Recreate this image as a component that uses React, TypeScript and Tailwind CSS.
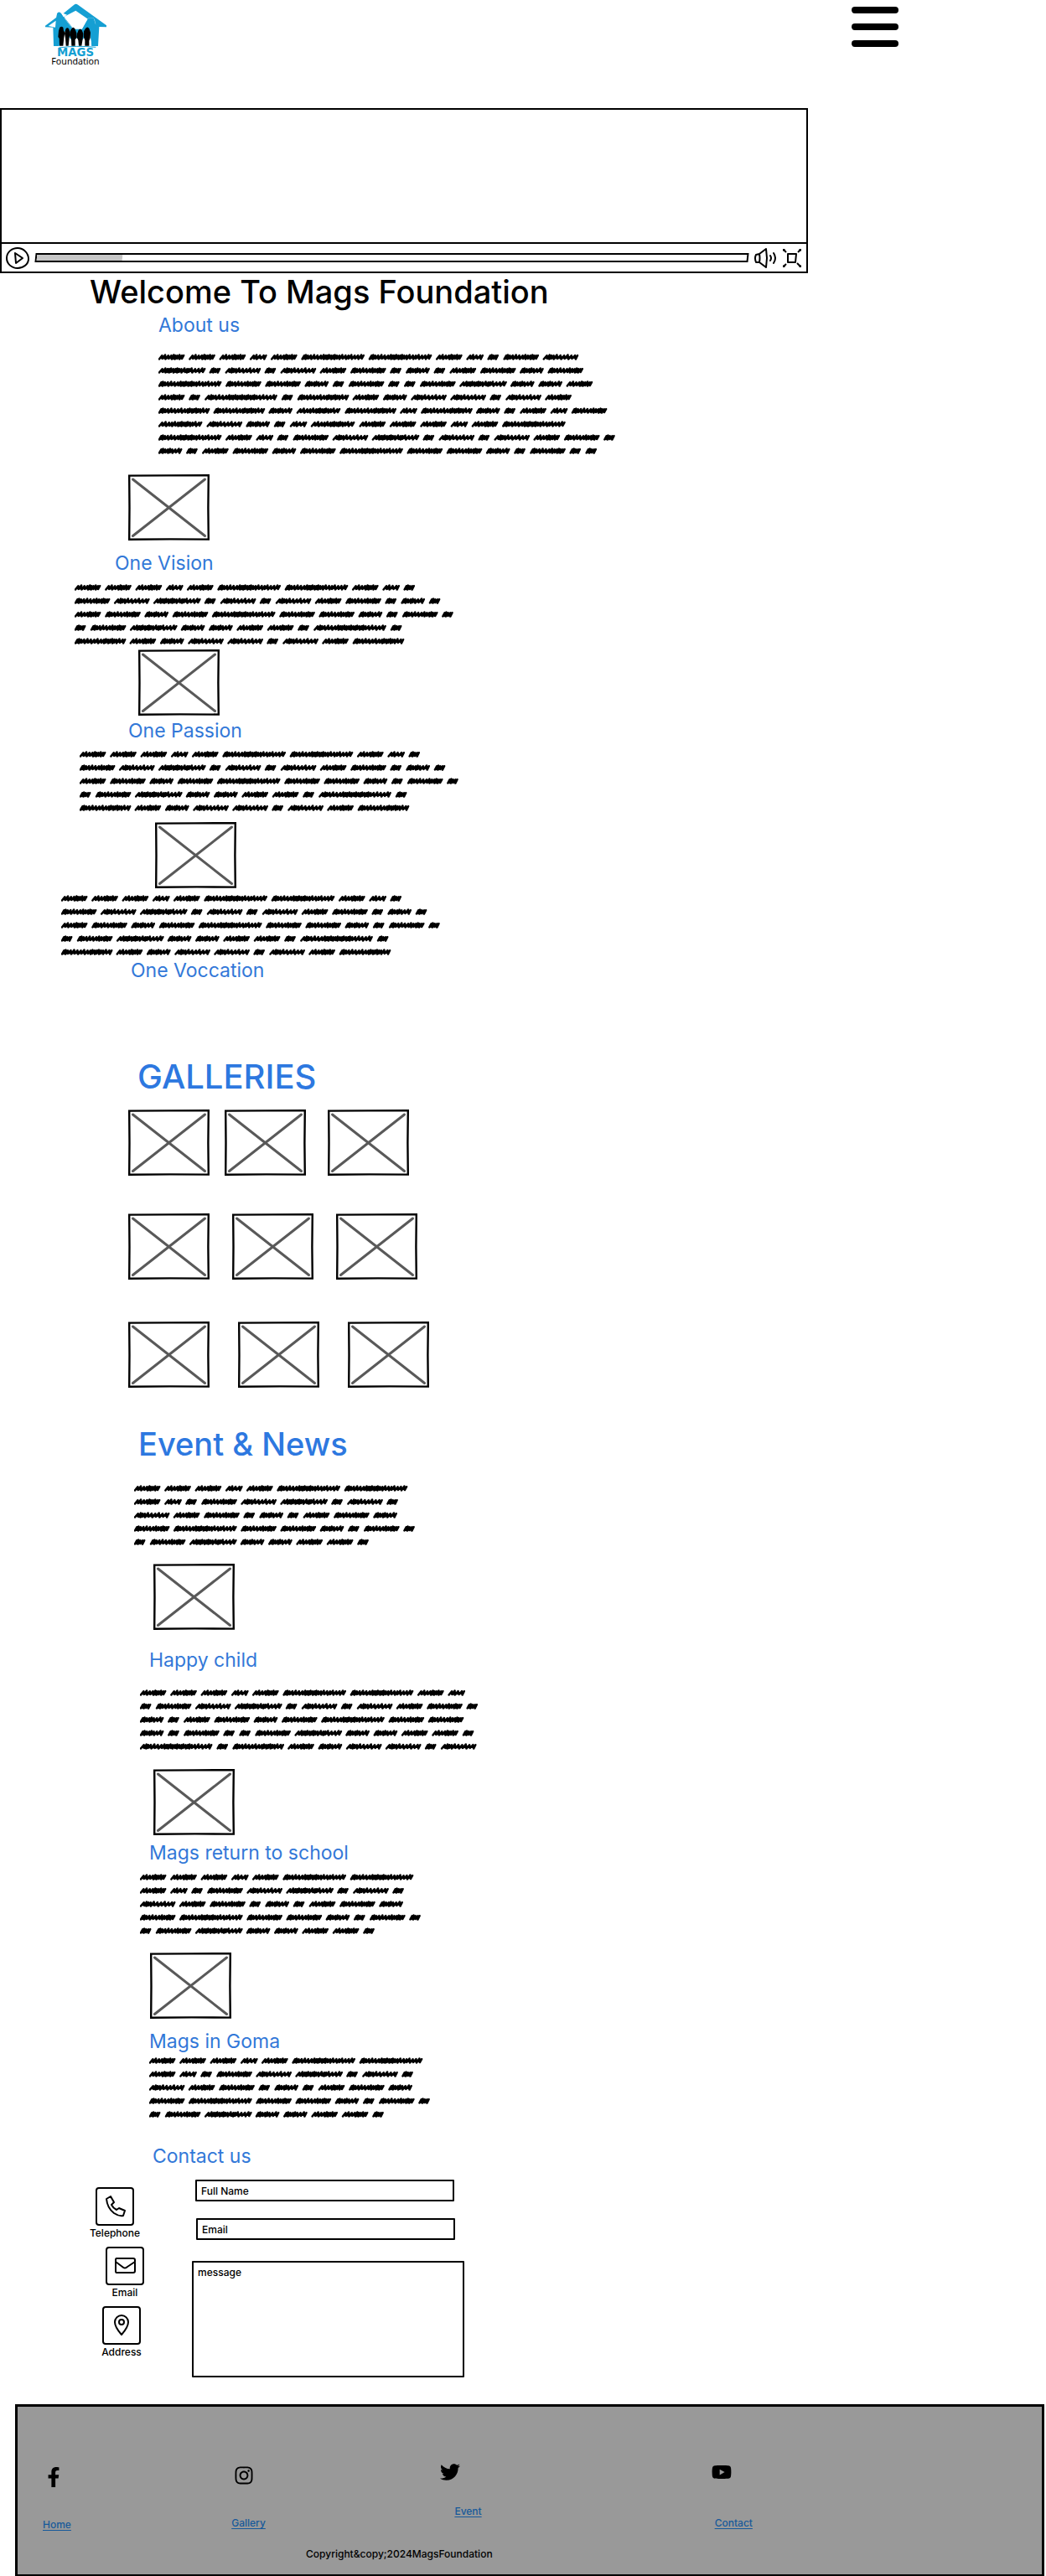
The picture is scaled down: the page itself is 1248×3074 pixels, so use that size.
import type { ReactNode } from "react";
import { FaFacebookF, FaInstagram, FaTwitter, FaYoutube } from "react-icons/fa";

/* Scribbled words: total width, distance to the next word, and the step between strokes. */
type Word = { width: number; pitch: number; steps: number[] };

const WORDS: Record<string, Word> = {
  a: { width: 31, pitch: 36.4, steps: [4, 4, 4, 4, 2, 2, 3, 3, 3] },
  b: { width: 20, pitch: 25, steps: [4, 3, 5, 4] },
  c: { width: 75, pitch: 80.3, steps: [2, 2, 3, 4, 4, 4, 4, 3, 2, 2, 2, 3, 2, 2, 3, 3, 4, 4, 3, 4, 4, 4, 4] },
  d: { width: 13, pitch: 19, steps: [2, 2, 3, 3] },
  e: { width: 42, pitch: 47.2, steps: [2, 2, 3, 4, 4, 4, 4, 3, 3, 3, 2, 2, 3] },
  f: { width: 42, pitch: 47, steps: [4, 2, 2, 3, 4, 4, 4, 4, 4, 4] },
  g: { width: 56, pitch: 60.8, steps: [4, 3, 2, 2, 2, 3, 2, 2, 2, 3, 4, 2, 2, 4, 4, 4, 4] },
  h: { width: 28, pitch: 33.3, steps: [2, 2, 3, 3, 2, 3, 4, 4] },
  i: { width: 86, pitch: 91.6, steps: [4, 2, 2, 4, 4, 4, 4, 3, 2, 2, 3, 2, 3, 2, 3, 2, 2, 3, 2, 2, 3, 4, 4, 4, 4, 4] },
  j: { width: 61, pitch: 65.8, steps: [2, 2, 3, 4, 4, 4, 4, 4, 4, 3, 2, 3, 2, 3, 2, 3, 4, 4] },
  k: { width: 52, pitch: 57.7, steps: [4, 4, 4, 3, 4, 3, 2, 2, 3, 2, 2, 3, 3, 4, 4] },
};

function strokePath(word: Word, x: number) {
  const total = word.steps.reduce((sum, step) => sum + step, 0);
  const scale = (word.width - 4) / total;
  let cursor = x + 1;
  let d = `M${cursor} 10.5`;
  word.steps.forEach((step, index) => {
    const size = step * scale;
    const peak = cursor + size * 0.5 + 1.5;
    const top = index % 3 === 1 ? 5.5 : 6.2;
    d += `L${peak} ${top}L${cursor + size} ${index % 2 ? 10.6 : 10}`;
    cursor += size;
  });
  return d + `L${cursor + 2.2} 6.2`;
}

const FULL = [
  "aaabaccabdef",
  "gdfdfaedhdaehe",
  "ceehdeddeghha",
  "adidjahffdfa",
  "jjhkjbjhdabe",
  "kfhdbkaaabac",
  "cabdefgdfdfaed",
  "hdaeheceehdedd",
];
const MEDIUM = ["aaabaccabd", "efgdfdfaedhd", "aeheceehded", "deghhaadid", "jahffdfaj"];
const SHORT = ["aaabacc", "abdefgdfd", "faedhdaeh", "eceehded", "deghhaad"];
const STORY = ["aaabaccab", "defgdfdfaed", "hdaehecee", "hdeddeghhaad", "idjahffdf"];

function Scribble({ lines, className }: { lines: string[]; className: string }) {
  return (
    <div className={className} role="img" aria-label="Paragraph text">
      {lines.map((line, row) => {
        let x = 0;
        let strokes = "";
        let belt = "";
        for (const key of line) {
          const word = WORDS[key];
          strokes += strokePath(word, x);
          belt += `M${x + 4} 9L${x + word.width - 4} 8.4`;
          x += word.pitch;
        }
        return (
          <svg key={row} width={Math.ceil(x)} height="16" className="block" aria-hidden="true">
            <g fill="none" stroke="#000" strokeLinecap="round" strokeLinejoin="round">
              <path d={strokes} strokeWidth="2.5" />
              <path d={belt} strokeWidth="3" />
            </g>
          </svg>
        );
      })}
    </div>
  );
}

function Picture({ className = "" }: { className?: string }) {
  return (
    <svg viewBox="0 0 97 79" className={`block h-[79px] w-[97px] shrink-0 ${className}`} role="img" aria-label="Picture">
      <path d="M1.2 1.6 48 1.4 95.8 1.2 95.4 40 95.8 77.6 50 77.4 1.2 77.8 1.5 40Z" fill="#fff" stroke="#000" strokeWidth="2.4" />
      <path d="M5.5 6 91.5 73.5M91.5 6 5.5 73.5" stroke="#595959" strokeWidth="3" strokeLinecap="round" />
    </svg>
  );
}

function Title({ className, children }: { className: string; children: ReactNode }) {
  return <h3 className={`text-[23px] leading-7 text-[#3278d8] ${className}`}>{children}</h3>;
}

function BigTitle({ className, children }: { className: string; children: ReactNode }) {
  return <h2 className={`leading-11 font-medium text-[#2d78e0] ${className}`}>{children}</h2>;
}

function Logo() {
  return (
    <svg viewBox="160 12 225 225" className="block h-[75px] w-[75px]" role="img" aria-label="Mags Foundation">
      <g fill="#159fd3">
        <path d="M228 48 266 17Q273 12 280 17L382 91 382 97 356 96 352 165 329 165 325 96 306 122 268 140 262 106 232 64 212 165 193 165 191 98 163 97 163 92 203 62 206 47Q212 40 220 48L228 62 268 33Q273 30 279 34L352 84 346 86 336 64 318 66 304 98 340 92Z" />
        <path d="M205 48 219 48 262 106 262 150 232 112 212 165 193 165ZM318 64 338 64 350 165 330 165 322 110 290 150 280 130Z" />
      </g>
      <path d="M272 38 344 88 336 64 318 64 296 104 264 104 230 60ZM174 93 201 74 199 98Z" fill="#fff" />
      <path d="M318 64 336 64 344 90 348 160 330 160 322 100 298 112 294 106Z" fill="#159fd3" />
      <g fill="#000">
        <path d="M215 98Q221 92 227 98L229 110 233 116 230 136 227 164 214 164 213 138 209 132 211 110Z" />
        <path d="M236 104Q242 96 248 104L252 116 249 136 246 164 237 164 235 136 232 120Z" />
        <path d="M257 103Q263 94 269 103L275 118 276 134 270 142 270 164 257 164 256 140 250 126 252 112Z" />
        <path d="M282 108Q288 101 294 108L299 120 297 140 293 164 283 164 281 144 276 134 277 120Z" />
        <path d="M307 102Q314 93 320 102L325 116 324 136 320 146 320 164 305 164 305 144 300 132 301 112Z" />
      </g>
      <path d="M212 171Q272 162 344 169" fill="none" stroke="#159fd3" strokeWidth="3" />
      <text x="271" y="202" textAnchor="middle" fontFamily="DejaVu Sans" fontSize="40" fontWeight="700" fill="#159fd3">
        MAGS
      </text>
      <text x="271" y="230" textAnchor="middle" fontFamily="Noto Sans" fontSize="32" fill="#000">
        Foundation
      </text>
    </svg>
  );
}

function Player() {
  return (
    <section aria-label="Video" className="mr-[284px] border-2 border-black bg-white">
      <div className="h-[158px]" />
      <div className="flex h-[35px] items-center gap-[7px] border-t-2 border-black px-[5px]">
        <button type="button" aria-label="Play">
          <svg width="28" height="28" viewBox="0 0 28 28" fill="none" stroke="#000" strokeWidth="2" strokeLinejoin="round" className="block">
            <path d="M14 2C21 2 27 8 27 15 27 21 21 26 14 26 7 26 1 21 1 14 1 7 7 2 14 2Z" />
            <path d="M11 8 20 14 12 20Z" />
          </svg>
        </button>
        <div className="h-[11px] flex-1 -skew-x-6 border-2 border-black" role="progressbar" aria-label="Playback" aria-valuenow={12}>
          <div className="h-full w-[12%] bg-[#c6c6c6]" />
        </div>
        <button type="button" aria-label="Volume">
          <svg width="26" height="24" viewBox="0 0 26 24" fill="none" stroke="#000" strokeWidth="2" strokeLinejoin="round" strokeLinecap="round" className="block">
            <path d="M2 8 6 7 14 1 15 12 14 23 6 17 2 17Q0 12 2 8ZM6 7Q7 12 6 17M19 9Q21 12 19 15M23 6Q27 12 23 18" />
          </svg>
        </button>
        <button type="button" aria-label="Full screen">
          <svg width="24" height="24" viewBox="0 0 24 24" fill="none" stroke="#000" strokeWidth="2" strokeLinejoin="round" className="block">
            <path d="M7 7 17 7 16 17 7 17ZM5 5 2 2M19 5 22 2M5 19 2 22M18 18 22 22" />
            <path d="M1 1 4 1 1 4ZM20 1 23 1 23 4ZM1 20 1 23 4 23ZM23 20 23 23 20 23Z" fill="#000" stroke="none" />
          </svg>
        </button>
      </div>
    </section>
  );
}

function ContactWay({ label, className, children }: { label: string; className: string; children: ReactNode }) {
  return (
    <div className={`flex w-16 flex-col items-center gap-px ${className}`}>
      <div className="flex size-[46px] items-center justify-center rounded-[4px] border-2 border-black">
        <svg width="30" height="30" viewBox="0 0 30 30" fill="none" stroke="#000" strokeWidth="2" strokeLinejoin="round" strokeLinecap="round">
          {children}
        </svg>
      </div>
      <span className="text-xs font-medium">{label}</span>
    </div>
  );
}

function FooterItem({ icon, label, className = "", linkClass }: { icon: ReactNode; label: string; className?: string; linkClass: string }) {
  return (
    <div className={`flex flex-col items-start text-2xl ${className}`}>
      {icon}
      <a href={`#${label.toLowerCase()}`} className={`text-xs font-medium text-[#17599a] underline underline-offset-2 ${linkClass}`}>
        {label}
      </a>
    </div>
  );
}

export default function App() {
  return (
    <div className="bg-white font-['Inter',sans-serif] text-black">
      <header className="flex h-[129px] items-start justify-between pr-[176px] pl-[53px]">
        <a href="#home" className="mt-1">
          <Logo />
        </a>
        <button type="button" aria-label="Menu" className="mt-2 flex w-14 flex-col gap-3">
          <span className="h-2 rounded-full bg-black" />
          <span className="h-2 rounded-full bg-black" />
          <span className="h-2 rounded-full bg-black" />
        </button>
      </header>

      <Player />

      <main>
        <h1 className="ml-[107px] text-[38px] leading-11 font-medium">Welcome To Mags Foundation</h1>

        <Title className="mt-1 ml-[189px]">About us</Title>
        <Scribble lines={FULL} className="mt-4 ml-[189px]" />

        <Picture className="mt-5 ml-[153px]" />
        <Title className="mt-[13px] ml-[137px]">One Vision</Title>
        <Scribble lines={MEDIUM} className="mt-[7px] ml-[89px]" />

        <Picture className="mt-[2px] ml-[165px]" />
        <Title className="mt-1 ml-[153px]">One Passion</Title>
        <Scribble lines={MEDIUM} className="mt-[6px] ml-[95px]" />

        <Picture className="mt-[9px] ml-[185px]" />
        <Scribble lines={MEDIUM} className="mt-1 ml-[73px]" />
        <Title className="ml-[156px]">One Voccation</Title>

        <BigTitle className="mt-[91px] ml-[164px] text-[40px]">GALLERIES</BigTitle>
        <div className="mt-[17px] ml-[153px]">
          <div className="flex gap-[18px]">
            <Picture />
            <Picture />
            <Picture className="ml-2" />
          </div>
          <div className="mt-[45px] flex gap-[27px]">
            <Picture />
            <Picture />
            <Picture />
          </div>
          <div className="mt-[50px] flex gap-[34px]">
            <Picture />
            <Picture />
            <Picture />
          </div>
        </div>

        <BigTitle className="mt-[45px] ml-[165px] text-[38px]">Event &amp; News</BigTitle>
        <Scribble lines={SHORT} className="mt-[23px] ml-[160px]" />

        <Picture className="mt-[18px] ml-[183px]" />
        <Title className="mt-[22px] ml-[178px]">Happy child</Title>
        <Scribble lines={STORY} className="mt-[17px] ml-[167px]" />

        <Picture className="mt-[19px] ml-[183px]" />
        <Title className="mt-[7px] ml-[178px]">Mags return to school</Title>
        <Scribble lines={SHORT} className="mt-[7px] ml-[167px]" />

        <Picture className="mt-[18px] ml-[179px]" />
        <Title className="mt-[13px] ml-[178px]">Mags in Goma</Title>
        <Scribble lines={SHORT} className="mt-px ml-[178px]" />

        <Title className="mt-[28px] ml-[182px]">Contact us</Title>
        <section className="mt-[14px] flex items-start">
          <div className="flex w-[229px] shrink-0 flex-col gap-2 pt-[9px]">
            <ContactWay label="Telephone" className="ml-[105px]">
              <path d="M5 6 10 3 14 10 11 13Q13 17 17 19L20 17 27 20 25 26Q20 27 14 23 6 17 5 6Z" />
            </ContactWay>
            <ContactWay label="Email" className="ml-[117px]">
              <path d="M5 6H25Q27 6 27 8V21Q27 23 25 23H5Q4 23 4 21V8Q4 6 5 6ZM4 10 12 16Q15 19 18 16L27 10" />
            </ContactWay>
            <ContactWay label="Address" className="ml-[113px]">
              <path d="M15 26Q7 17 7 11A8 8 0 0 1 23 11Q23 17 15 26Z" />
              <circle cx="15" cy="11" r="3" />
            </ContactWay>
          </div>
          <form className="flex w-[325px] flex-col items-start text-xs font-medium">
            <input
              aria-label="Full Name"
              placeholder="Full Name"
              className="ml-1 h-[26px] w-[309px] rounded-[1px] border-2 border-black px-[5px] placeholder:text-black"
            />
            <input
              aria-label="Email"
              placeholder="Email"
              className="mt-5 ml-[5px] h-[26px] w-[309px] rounded-[1px] border-2 border-black px-[5px] placeholder:text-black"
            />
            <textarea
              aria-label="message"
              placeholder="message"
              className="mt-[25px] block h-[139px] w-full resize-none rounded-[1px] border-2 border-black px-[5px] py-1 placeholder:text-black"
            />
          </form>
        </section>
      </main>

      <footer className="mt-8 mr-[2px] ml-[18px] border-[3px] border-black bg-[#999] pb-4">
        <div className="grid h-[168px] grid-cols-[225fr_249fr_323fr_394fr] pt-[66px] pl-[30px]">
          <FooterItem icon={<FaFacebookF className="ml-px" />} label="Home" className="pt-[6px]" linkClass="mt-[37px]" />
          <FooterItem icon={<FaInstagram className="ml-[3px]" />} label="Gallery" className="pt-1" linkClass="mt-[37px]" />
          <FooterItem icon={<FaTwitter />} label="Event" linkClass="mt-[27px] ml-[17px]" />
          <FooterItem icon={<FaYoutube />} label="Contact" linkClass="mt-[41px] ml-1" />
        </div>
        <p className="ml-[344px] text-xs font-medium">{"Copyright&copy;2024MagsFoundation"}</p>
      </footer>
    </div>
  );
}
